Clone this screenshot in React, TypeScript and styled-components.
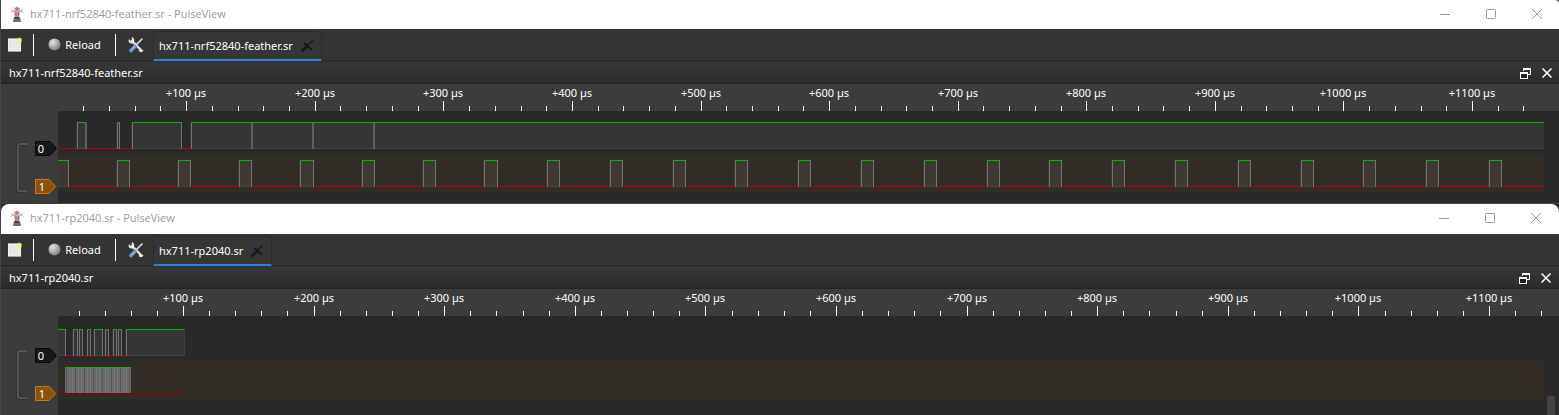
import React from "react";
import styled, { createGlobalStyle } from "styled-components";

const Global = createGlobalStyle`
  * { box-sizing: border-box; }
  body { margin: 0; background: #2a2a2a; }
  #root { min-height: 100vh; display: flex; }
`;

const Desktop = styled.main`
  flex: 1;
  min-width: 0;
  display: flex;
  flex-direction: column;
  font-family: "Noto Sans", "Open Sans", sans-serif;
  font-size: 11px;
  line-height: 16px;
  color: #fff;
`;

const Frame = styled.section<{ $fill: boolean }>`
  display: flex;
  flex-direction: column;
  flex: ${(p) => (p.$fill ? "1 0 auto" : "0 0 auto")};
  border-left: 1px solid #444;
  background: #2a2a2a;
`;

const TitleBar = styled.header<{ $rounded: boolean }>`
  display: flex;
  align-items: center;
  height: ${(p) => (p.$rounded ? 30 : 29)}px;
  padding: 0 ${(p) => (p.$rounded ? 17 : 16)}px 2px 8px;
  gap: 5px;
  background: #fff;
  border-radius: ${(p) => (p.$rounded ? "8px 8px 0 0" : "0 4px 0 0")};
`;

const WindowTitle = styled.h1`
  margin: 0;
  flex: 1;
  font-family: "Open Sans", sans-serif;
  font-size: 11px;
  font-weight: 400;
  color: #999;
`;

const IconButton = styled.button`
  display: flex;
  align-items: center;
  justify-content: center;
  padding: 0;
  border: 0;
  background: none;
  color: inherit;
`;

const WindowButtons = styled.div`
  display: flex;
  gap: 34px;
  color: #999;
`;

const Toolbar = styled.div`
  display: flex;
  align-items: center;
  height: 32px;
  padding-left: 7px;
  background: #343434;
  border-bottom: 1px solid #282828;
`;

const Separator = styled.span`
  width: 1px;
  height: 22px;
  background: #fff;
`;

const NewButton = styled(IconButton)`
  width: 14px;
  margin-right: 11px;
`;

const ReloadButton = styled(IconButton)`
  width: 81px;
  gap: 4px;
  font: inherit;
`;

const SettingsButton = styled(IconButton)`
  width: 16px;
  margin: 0 9px 0 12px;
`;

const Tab = styled.div`
  display: flex;
  align-items: center;
  align-self: flex-end;
  height: 30px;
  padding: 0 7px 0 5px;
  gap: 8px;
  margin-bottom: -1px;
  background: #363636;
  border: 1px solid #2b2b2b;
  border-bottom: 2px solid #2a82da;
  border-radius: 4px 4px 0 0;
`;

const DockBar = styled.div<{ $last: boolean }>`
  display: flex;
  align-items: center;
  height: 23px;
  padding: 1px ${(p) => (p.$last ? 8 : 7)}px 0 8px;
  gap: 11px;
  background: linear-gradient(#373737, #2b2b2b);
  border-top: 1px solid #303030;
  border-bottom: 1px solid #242424;
`;

const DockTitle = styled.h2`
  margin: 0;
  flex: 1;
  font-size: 11px;
  font-weight: 400;
`;

const View = styled.div`
  flex: 1;
  display: grid;
  grid-template-columns: 57px 1fr;
  grid-template-rows: 27px 1fr;
  background: #3c3c3c;
`;

const RulerSvg = styled.svg`
  grid-column: 2;
  display: block;
  width: 100%;
  height: 27px;
`;

const Canvas = styled.div<{ $last: boolean }>`
  min-height: ${(p) => (p.$last ? 99 : 93)}px;
  padding-right: ${(p) => (p.$last ? 16 : 15)}px;
  padding-top: ${(p) => (p.$last ? 2 : 0)}px;
  background: #292929;
  position: relative;
  border-bottom: ${(p) => (p.$last ? "0" : "1px solid #444")};
`;

const ScrollThumb = styled.span`
  position: absolute;
  right: 4px;
  bottom: 0;
  width: 8px;
  height: 19px;
  border-radius: 2px 2px 0 0;
  background: #444;
`;

const HeaderSvg = styled.svg<{ $last: boolean }>`
  display: block;
  width: 57px;
  height: 92px;
  margin-top: ${(p) => (p.$last ? 2 : 0)}px;
`;

const TraceSvg = styled.svg`
  display: block;
  width: 100%;
  height: 92px;
`;

const Label = styled.text`
  font-family: "Noto Sans", sans-serif;
  font-size: 11px;
  fill: #fff;
  text-anchor: middle;
`;

type Pulse = [number, number];

const AppIcon = () => (
  <svg width="16" height="18" viewBox="0 0 16 18" fill="none">
    <path d="M2 7.5Q4 4 7 8M14 7.5Q12 4 9 8M2.5 4.5L6.5 7M13.5 4.5L9.5 7M5 2.5L7 7M11 2.5L9 7M8 1.5V6" stroke="#a4a4a4" />
    <path d="M6 3L8 2L10 3L9 6H7Z" fill="#8d8d8d" />
    <path d="M5 7H11L10 13H6Z" fill="#c2a39c" />
    <path d="M7 6.5V12" stroke="#ea7440" strokeWidth="2" />
    <path d="M9.5 7V11" stroke="#7868c0" />
    <path d="M5 12H11L12 17H4Z" fill="#70706a" />
    <path d="M6 12H10V14H6Z" fill="#44443f" />
  </svg>
);

const PageIcon = () => (
  <svg width="15" height="16" viewBox="0 0 15 16">
    <rect x="0.5" y="1.5" width="13" height="13" fill="#e8e8e6" stroke="#f8f8f8" />
    <path d="M2.5 4V13" stroke="#ccc" strokeDasharray="1 2" />
    <circle cx="12" cy="3" r="3" fill="#f5ec9a" opacity=".6" />
    <circle cx="12" cy="3" r="1.5" fill="#fff25c" />
  </svg>
);

const BallIcon = ({ id }: { id: string }) => (
  <svg width="13" height="13" viewBox="0 0 13 13">
    <defs>
      <radialGradient id={id} cx=".35" cy=".3" r=".7">
        <stop offset="0" stopColor="#e4e4e0" />
        <stop offset=".5" stopColor="#b4b4b0" />
        <stop offset="1" stopColor="#80807c" />
      </radialGradient>
    </defs>
    <circle cx="6.5" cy="6.5" r="6" fill={`url(#${id})`} />
  </svg>
);

const ToolsIcon = () => (
  <svg width="16" height="16" viewBox="0 0 16 16" fill="none" strokeLinecap="round">
    <path d="M4 4L13 13" stroke="#e2e4e2" strokeWidth="2.4" />
    <path d="M1.5 3.5Q1.5 6 4.5 5.5Q6 4 4.5 1.3" stroke="#f0f0ee" strokeWidth="1.8" />
    <path d="M14.5 13.5Q12.5 15.5 11.5 13.5" stroke="#e8e8e6" strokeWidth="1.6" />
    <path d="M14 2L8 8" stroke="#e6e6e4" strokeWidth="1.6" />
    <path d="M7 9.5L3 13.5" stroke="#6f97ce" strokeWidth="3.6" />
    <path d="M6.5 9.5L3 13" stroke="#a7c2e6" strokeWidth="1" />
  </svg>
);

const TabCloseIcon = () => (
  <svg width="13" height="13" viewBox="0 0 13 13" fill="none" stroke="#161616" strokeLinecap="round">
    <path d="M1.5 11.5L5.5 7.5" strokeWidth="2.6" />
    <path d="M5 8L11.5 1.5" strokeWidth="1.3" />
    <path d="M4 4.5Q6 5.5 7.5 8L10.5 10.5" strokeWidth="2" />
  </svg>
);

const Ruler = ({ origin, step }: { origin: number; step: number }) => (
  <RulerSvg>
    {Array.from({ length: 57 }, (_, i) => {
      const n = i + 1;
      const x = Math.floor(origin + ((n - 5) * step) / 5);
      const major = n % 5 === 0;
      return (
        <React.Fragment key={n}>
          <rect x={x} y={major ? 17 : 22} width="1" height={major ? 10 : 5} fill="#fff" />
          {major && <Label x={x} y="13">{`+${n * 20} µs`}</Label>}
        </React.Fragment>
      );
    })}
  </RulerSvg>
);

const BRACKET = "M26 33H19Q17 33 17 35V78Q17 80 19 80H26";

const ChannelHeader = ({ last }: { last: boolean }) => (
  <HeaderSvg $last={last}>
    <path d={BRACKET} fill="none" stroke="#323232" strokeWidth="4" />
    <path d={BRACKET} fill="none" stroke="#565651" strokeWidth="2" />
    <path d="M34.5 30.5H49L55.5 37.5L49 44.5H34.5Z" fill="#16191a" stroke="#070909" />
    <path d="M34.5 68.5H48L54.5 75.5L48 82.5H34.5Z" fill="#8f5202" stroke="#ce7b0b" />
    <Label x="40" y="42">0</Label>
    <Label x="41" y="80">1</Label>
  </HeaderSvg>
);

const HIGH = "#00b800";
const LOW = "#c00000";

interface LaneProps {
  y: number;
  pulses: Pulse[];
  glitches?: number[];
  end?: number;
  open?: boolean;
}

/* One digital channel: low rail, filled pulses, and the edges between them. */
const Lane = ({ y, pulses, glitches = [], end, open }: LaneProps) => (
  <g>
    <rect x="0" y={y + 26} width={end ?? "100%"} height="1" fill={LOW} />
    {pulses.map(([from, to], i) => {
      const toEnd = open && i === pulses.length - 1;
      const width = toEnd ? "100%" : to - from;
      return (
        <g key={from}>
          <rect x={from} y={y + 26} width={width} height="1" fill="#454545" />
          <rect x={from} y={y} width={width} height="26" fill="#fff" fillOpacity=".06" />
          {from > 0 && <rect x={from} y={y} width="1" height="27" fill="#747474" />}
          {from > 0 && <rect x={from - 1} y={y + 1} width="1" height="25" fill="#fff" fillOpacity=".06" />}
          {!toEnd && <rect x={to} y={y} width="1" height="27" fill={to === end ? "#404040" : "#747474"} />}
          <rect x={from} y={y} width={width} height="1" fill={HIGH} />
        </g>
      );
    })}
    {glitches.map((x) => (
      <rect key={x} x={x} y={y + 1} width="2" height="26" fill="#606060" />
    ))}
  </g>
);

interface CaptureProps {
  file: string;
  last?: boolean;
  origin: number;
  step: number;
  children: React.ReactNode;
}

const CaptureWindow = ({ file, last = false, origin, step, children }: CaptureProps) => (
  <Frame $fill={last}>
    <TitleBar $rounded={last}>
      <AppIcon />
      <WindowTitle>{file} - PulseView</WindowTitle>
      <WindowButtons>
        <IconButton aria-label="Minimize">
          <svg width="12" height="12" fill="none" stroke="currentColor"><path d="M1 6.5H11" /></svg>
        </IconButton>
        <IconButton aria-label="Maximize">
          <svg width="12" height="12" fill="none" stroke="currentColor"><rect x="1.5" y="1.5" width="9" height="9" rx="1" /></svg>
        </IconButton>
        <IconButton aria-label="Close">
          <svg width="12" height="12" fill="none" stroke="currentColor"><path d="M1 1L11 11M11 1L1 11" /></svg>
        </IconButton>
      </WindowButtons>
    </TitleBar>
    <Toolbar>
      <NewButton aria-label="New session"><PageIcon /></NewButton>
      <Separator />
      <ReloadButton><BallIcon id={`ball-${file}`} />Reload</ReloadButton>
      <Separator />
      <SettingsButton aria-label="Settings"><ToolsIcon /></SettingsButton>
      <Tab>
        <span>{file}</span>
        <IconButton aria-label="Close tab"><TabCloseIcon /></IconButton>
      </Tab>
    </Toolbar>
    <DockBar $last={last}>
      <DockTitle>{file}</DockTitle>
      <IconButton aria-label="Float">
        <svg width="11" height="11" fill="none" stroke="#fff">
          <path d="M3.5 3V.5H10.5V6.5H8" />
          <path d="M3 1H11" strokeWidth="2" />
          <rect x=".5" y="4.5" width="7" height="6" fill="#222" />
          <path d="M0 5H8" strokeWidth="2" />
        </svg>
      </IconButton>
      <IconButton aria-label="Close view">
        <svg width="10" height="10" stroke="#fff" strokeWidth="1.5"><path d="M.5 .5L9.5 9.5M9.5 .5L.5 9.5" /></svg>
      </IconButton>
    </DockBar>
    <View>
      <Ruler origin={origin} step={step} />
      <ChannelHeader last={last} />
      <Canvas $last={last}>
        <TraceSvg shapeRendering="crispEdges">
          <rect x="0" y="43" width="100%" height="38" fill="#322c27" />
          {children}
        </TraceSvg>
        {last && <ScrollThumb />}
      </Canvas>
    </View>
  </Frame>
);

const clockPulses: Pulse[] = [
  [0, 10], [59, 71], [120, 132], [181, 193], [242, 255], [304, 316], [365, 377], [426, 439],
  ...Array.from({ length: 16 }, (_, i): Pulse => {
    const from = Math.round(489 + i * 62.8);
    return [from, from + 12];
  }),
];

const featherData: Pulse[] = [[19, 27], [59, 61], [74, 123], [133, 1486]];
const picoData: Pulse[] = [
  [0, 7], [15, 19], [21, 24], [29, 32], [36, 44], [47, 50], [55, 58], [60, 63], [68, 126],
];

const ClockBurst = () => (
  <g>
    <rect x="0" y="75" width="126" height="1" fill="#900000" />
    <rect x="7" y="50" width="66" height="25" fill="#6a6a6a" />
    {Array.from({ length: 22 }, (_, i) => (
      <rect key={i} x={8 + i * 3} y="50" width="1" height="25" fill={i % 3 ? "#777" : "#585858"} />
    ))}
    <rect x="7" y="49" width="66" height="1" fill={HIGH} />
  </g>
);

export default function App() {
  return (
    <>
      <Global />
      <Desktop>
        <CaptureWindow file="hx711-nrf52840-feather.sr" origin={128.7} step={128.58}>
          <Lane y={11} pulses={featherData} glitches={[27, 193, 254, 315]} open />
          <Lane y={49} pulses={clockPulses} />
        </CaptureWindow>
        <CaptureWindow file="hx711-rp2040.sr" origin={125.5} step={130.6} last>
          <Lane y={11} pulses={picoData} end={126} />
          <ClockBurst />
        </CaptureWindow>
      </Desktop>
    </>
  );
}
